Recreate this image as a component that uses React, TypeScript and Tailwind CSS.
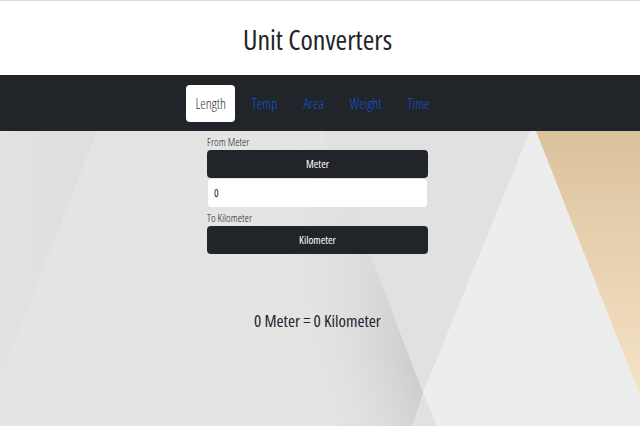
const tabs = ["Length", "Temp", "Area", "Weight", "Time"];

function Background() {
  return (
    <svg
      className="absolute inset-0 h-full w-full"
      viewBox="0 0 640 295"
      preserveAspectRatio="none"
      aria-hidden="true"
    >
      <defs>
        <linearGradient id="beige" x1="0" y1="0" x2="0" y2="1">
          <stop offset="0" stopColor="#dbc29d" />
          <stop offset="1" stopColor="#f5e3c5" />
        </linearGradient>
        <linearGradient id="shade" gradientUnits="userSpaceOnUse" x1="300" y1="240" x2="420" y2="200">
          <stop offset="0" stopColor="#e3e3e3" stopOpacity="0" />
          <stop offset="1" stopColor="#c6c6c6" />
        </linearGradient>
        <linearGradient id="fade" gradientUnits="userSpaceOnUse" x1="0" y1="0" x2="0" y2="230">
          <stop offset="0" stopColor="#e4e4e4" />
          <stop offset="0.35" stopColor="#e4e4e4" stopOpacity="0.8" />
          <stop offset="1" stopColor="#e4e4e4" stopOpacity="0" />
        </linearGradient>
        <linearGradient id="leftShade" x1="0" y1="0" x2="1" y2="0">
          <stop offset="0" stopColor="#e2e2e2" />
          <stop offset="1" stopColor="#dedede" />
        </linearGradient>
      </defs>
      <rect x="0" y="0" width="640" height="295" fill="#e4e4e4" />
      <polygon points="0,0 97,0 0,247" fill="url(#leftShade)" />
      <polygon points="323,0 530,0 423,262 437,295 412,295 423,262" fill="#e1e1e1" />
      <polygon points="250,0 323,0 423,262 412,295 250,295" fill="url(#shade)" />
      <polygon points="250,0 323,0 423,262 412,295 250,295" fill="url(#fade)" />
      <polygon points="530,0 536,0 640,264 640,295 437,295 423,262" fill="#ededed" />
      <polygon points="536,0 640,0 640,264" fill="url(#beige)" />
    </svg>
  );
}

export default function App() {
  return (
    <div className="flex h-screen flex-col overflow-hidden font-['Open_Sans',sans-serif] [font-stretch:75%] text-[#212529]">
      <header className="flex h-[75px] items-center justify-center border-t border-[#dcdcdc] bg-white pr-[5px]">
        <h1 className="pt-[2px] text-[28px] leading-none">Unit Converters</h1>
      </header>

      <nav className="flex h-[56px] items-center justify-center bg-[#212529] pr-[15px]">
        <ul className="flex gap-[8px]">
          {tabs.map((t, i) => (
            <li
              key={t}
              className={
                i === 0
                  ? "flex h-[37px] items-center rounded-[4px] bg-white px-[9px] text-[14px] font-light text-[#333333]"
                  : "flex h-[37px] items-center px-[9px] text-[14px] font-light text-[#0b57d9]"
              }
            >
              {t}
            </li>
          ))}
        </ul>
      </nav>

      <main className="relative flex-1">
        <Background />
        <div className="relative flex flex-col items-center pr-[5px]">
          <div className="flex w-[221px] flex-col">
            <label className="pt-[3px] pb-[1px] text-[11px] font-light leading-[15px] text-[#222222]">From Meter</label>
            <button className="flex h-[28px] items-center justify-center rounded-[4px] bg-[#212529] text-[11px] text-white">
              Meter
            </button>
            <div className="mx-[1px] mt-[1px] flex h-[28px] items-center rounded-[4px] bg-white px-[6px] text-[11px] text-[#212529]">
              0
            </div>
            <label className="pt-[3px] pb-[1px] text-[11px] font-light leading-[15px] text-[#222222]">To Kilometer</label>
            <button className="flex h-[28px] items-center justify-center rounded-[4px] bg-[#212529] text-[11px] text-white">
              Kilometer
            </button>
          </div>
          <p className="mt-[55px] text-[17px] leading-[24px] text-[#212529]">0 Meter = 0 Kilometer</p>
        </div>
      </main>
    </div>
  );
}
